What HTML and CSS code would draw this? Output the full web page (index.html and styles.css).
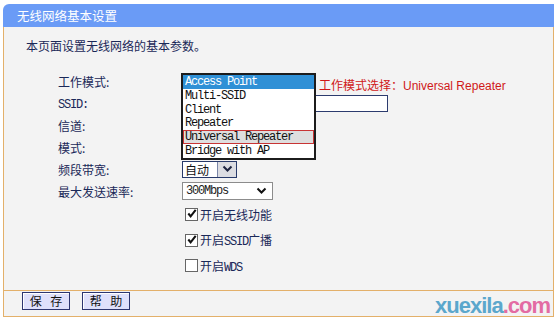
FILE: index.html
```html
<!DOCTYPE html>
<html lang="zh-CN">
<head>
    <meta charset="UTF-8">
    <title>无线网络基本设置</title>
    <link rel="stylesheet" href="styles.css">
</head>
<body>
    <div class="panel">
        <!-- 标题栏 -->
        <div class="panel-title">无线网络基本设置</div>

        <div class="panel-body">
            <p class="intro">本页面设置无线网络的基本参数。</p>

            <div class="form">
                <div class="row">
                    <span class="label">工作模式:</span>
                    <div class="control">
                        <span class="select-stub"></span>
                        <span class="note">工作模式选择：<span class="note-en">Universal Repeater</span></span>
                        <!-- 展开的下拉列表 -->
                        <ul class="dropdown">
                            <li class="active">Access Point</li>
                            <li>Multi-SSID</li>
                            <li>Client</li>
                            <li>Repeater</li>
                            <li class="hover">Universal Repeater</li>
                            <li>Bridge with AP</li>
                        </ul>
                    </div>
                </div>
                <div class="row">
                    <span class="label"><span class="en">SSID:</span></span>
                    <div class="control"><span class="text-input"></span></div>
                </div>
                <div class="row">
                    <span class="label">信道:</span>
                    <div class="control"></div>
                </div>
                <div class="row">
                    <span class="label">模式:</span>
                    <div class="control"></div>
                </div>
                <div class="row">
                    <span class="label">频段带宽:</span>
                    <div class="control">
                        <span class="select select-band">
                            <span class="select-text">自动</span>
                            <span class="select-btn">
                                <svg width="11" height="8" viewBox="0 0 11 8"><polyline points="1.5,1.5 5.5,5.5 9.5,1.5" fill="none" stroke="#1d2440" stroke-width="2"/></svg>
                            </span>
                        </span>
                    </div>
                </div>
                <div class="row">
                    <span class="label">最大发送速率:</span>
                    <div class="control">
                        <span class="select select-rate">
                            <span class="select-text en">300Mbps</span>
                            <svg width="11" height="8" viewBox="0 0 11 8"><polyline points="1.5,1.5 5.5,5.5 9.5,1.5" fill="none" stroke="#111" stroke-width="2"/></svg>
                        </span>
                    </div>
                </div>

                <div class="check-row">
                    <span class="checkbox checked">
                        <svg width="13" height="13" viewBox="0 0 13 13"><polyline points="2.5,6.5 5,9.5 10.5,2.5" fill="none" stroke="#111" stroke-width="2.2"/></svg>
                    </span>
                    <span class="check-label">开启无线功能</span>
                </div>
                <div class="check-row">
                    <span class="checkbox checked">
                        <svg width="13" height="13" viewBox="0 0 13 13"><polyline points="2.5,6.5 5,9.5 10.5,2.5" fill="none" stroke="#111" stroke-width="2.2"/></svg>
                    </span>
                    <span class="check-label">开启<span class="en">SSID</span>广播</span>
                </div>
                <div class="check-row">
                    <span class="checkbox"></span>
                    <span class="check-label">开启<span class="en">WDS</span></span>
                </div>
            </div>
        </div>

        <!-- 底部按钮 -->
        <div class="panel-foot">
            <button class="btn">保 存</button>
            <button class="btn">帮 助</button>
            <span class="watermark">xuexila<span class="dot-com">.com</span></span>
        </div>
    </div>
</body>
</html>
```

FILE: styles.css
```css
/* 页面 */
body, html {
    margin: 0;
    padding: 0;
    background: #fff;
    font-family: "Noto Sans CJK SC", "Liberation Sans", sans-serif;
    font-size: 12px;
    color: #1a2858;
}

.en {
    font-family: "Liberation Mono", monospace;
    font-size: 12px;
    letter-spacing: -1.2px;
}

/* 面板 */
.panel {
    margin: 4px 0 0 3px;
    width: 551px;
    position: relative;
}

.panel-title {
    height: 23px;
    line-height: 23px;
    background: #6a9bf6;
    color: #fff;
    font-size: 12.5px;
    padding-left: 14px;
    border-radius: 6px 0 0 0;
}

.panel-body {
    background: #f3f3f3;
    border-left: 1px solid #e3b06a;
    border-right: 1px solid #e3b06a;
    padding: 11px 0 11px 0;
}

.intro {
    margin: 0 0 16px 22px;
    line-height: 16px;
}

/* 表单行 */
.form {
    padding-left: 54px;
}

.row {
    display: flex;
    align-items: center;
    height: 22px;
}

.label {
    width: 124px;
    flex-shrink: 0;
}

.control {
    position: relative;
    display: flex;
    align-items: center;
    height: 100%;
}

.select-stub {
    width: 134px;
    height: 17px;
}

.note {
    color: #d01818;
    margin-left: 3px;
    margin-top: 6px;
    font-size: 12px;
}

.note-en {
    font-family: "Liberation Sans", sans-serif;
}

.text-input {
    width: 205px;
    height: 15px;
    background: #fff;
    border: 1px solid #2c3b6e;
    margin-left: -1px;
}

/* 下拉列表 */
.dropdown {
    position: absolute;
    top: 3px;
    left: -1px;
    width: 131px;
    margin: 0;
    padding: 0;
    list-style: none;
    background: #fff;
    border: 2px solid #1c1c1c;
    z-index: 2;
    font-family: "Liberation Mono", monospace;
    font-size: 12px;
    letter-spacing: -1.2px;
    color: #111;
}

.dropdown li {
    height: 13.8px;
    line-height: 14px;
    padding-left: 2px;
    box-sizing: border-box;
    white-space: nowrap;
}

.dropdown li.active {
    background: #2f90d6;
    color: #fff;
}

.dropdown li.hover {
    background: #dedede;
    border: 1px solid #c83434;
    line-height: 12px;
    padding-left: 1px;
}

/* 选择框 */
.select {
    display: flex;
    align-items: center;
    height: 17px;
    box-sizing: border-box;
    background: #fff;
}

.select-band {
    width: 55px;
    border: 1px solid #283a6a;
}

.select-band .select-text {
    flex: 1;
    padding-left: 2px;
    color: #111;
}

.select-btn {
    width: 18px;
    height: 100%;
    background: #dcdde2;
    border-left: 1px solid #7a86a8;
    display: flex;
    align-items: center;
    justify-content: center;
}

.select-rate {
    width: 91px;
    border: 1px solid #8c8c8c;
    padding: 0 5px 0 3px;
    justify-content: space-between;
    height: 18px;
}

.select-rate .select-text {
    color: #222;
}

/* 复选框 */
.check-row {
    display: flex;
    align-items: center;
    height: 25.5px;
    padding-left: 127px;
}

.check-row:first-of-type {
    margin-top: 6px;
}

.checkbox {
    width: 11px;
    height: 11px;
    border: 1px solid #666;
    background: #fff;
    display: flex;
    align-items: center;
    justify-content: center;
    margin-right: 2px;
}

.checkbox svg {
    margin: -2px -1px 0 0;
}

.check-label {
    color: #1a2858;
}

/* 底部 */
.panel-foot {
    position: relative;
    height: 25px;
    background: #f3f3f3;
    border: 1px solid #e3b06a;
    display: flex;
    align-items: flex-start;
    padding-left: 18px;
    gap: 12px;
}

.btn {
    margin-top: 1px;
    width: 48px;
    height: 18px;
    padding: 0;
    background: #dfe0fb;
    border: 1px solid #2d3570;
    box-shadow: inset 1px 1px 0 #fff;
    font-family: "Noto Sans CJK SC", sans-serif;
    font-size: 12px;
    line-height: 15px;
    letter-spacing: 3px;
    text-indent: 3px;
    color: #111;
}

.watermark {
    position: absolute;
    right: 3px;
    bottom: -3px;
    font-family: "Liberation Sans", sans-serif;
    font-weight: bold;
    font-size: 22px;
    letter-spacing: -1px;
    color: #5ba7cc;
}

.dot-com {
    color: #e36ba3;
}
```
